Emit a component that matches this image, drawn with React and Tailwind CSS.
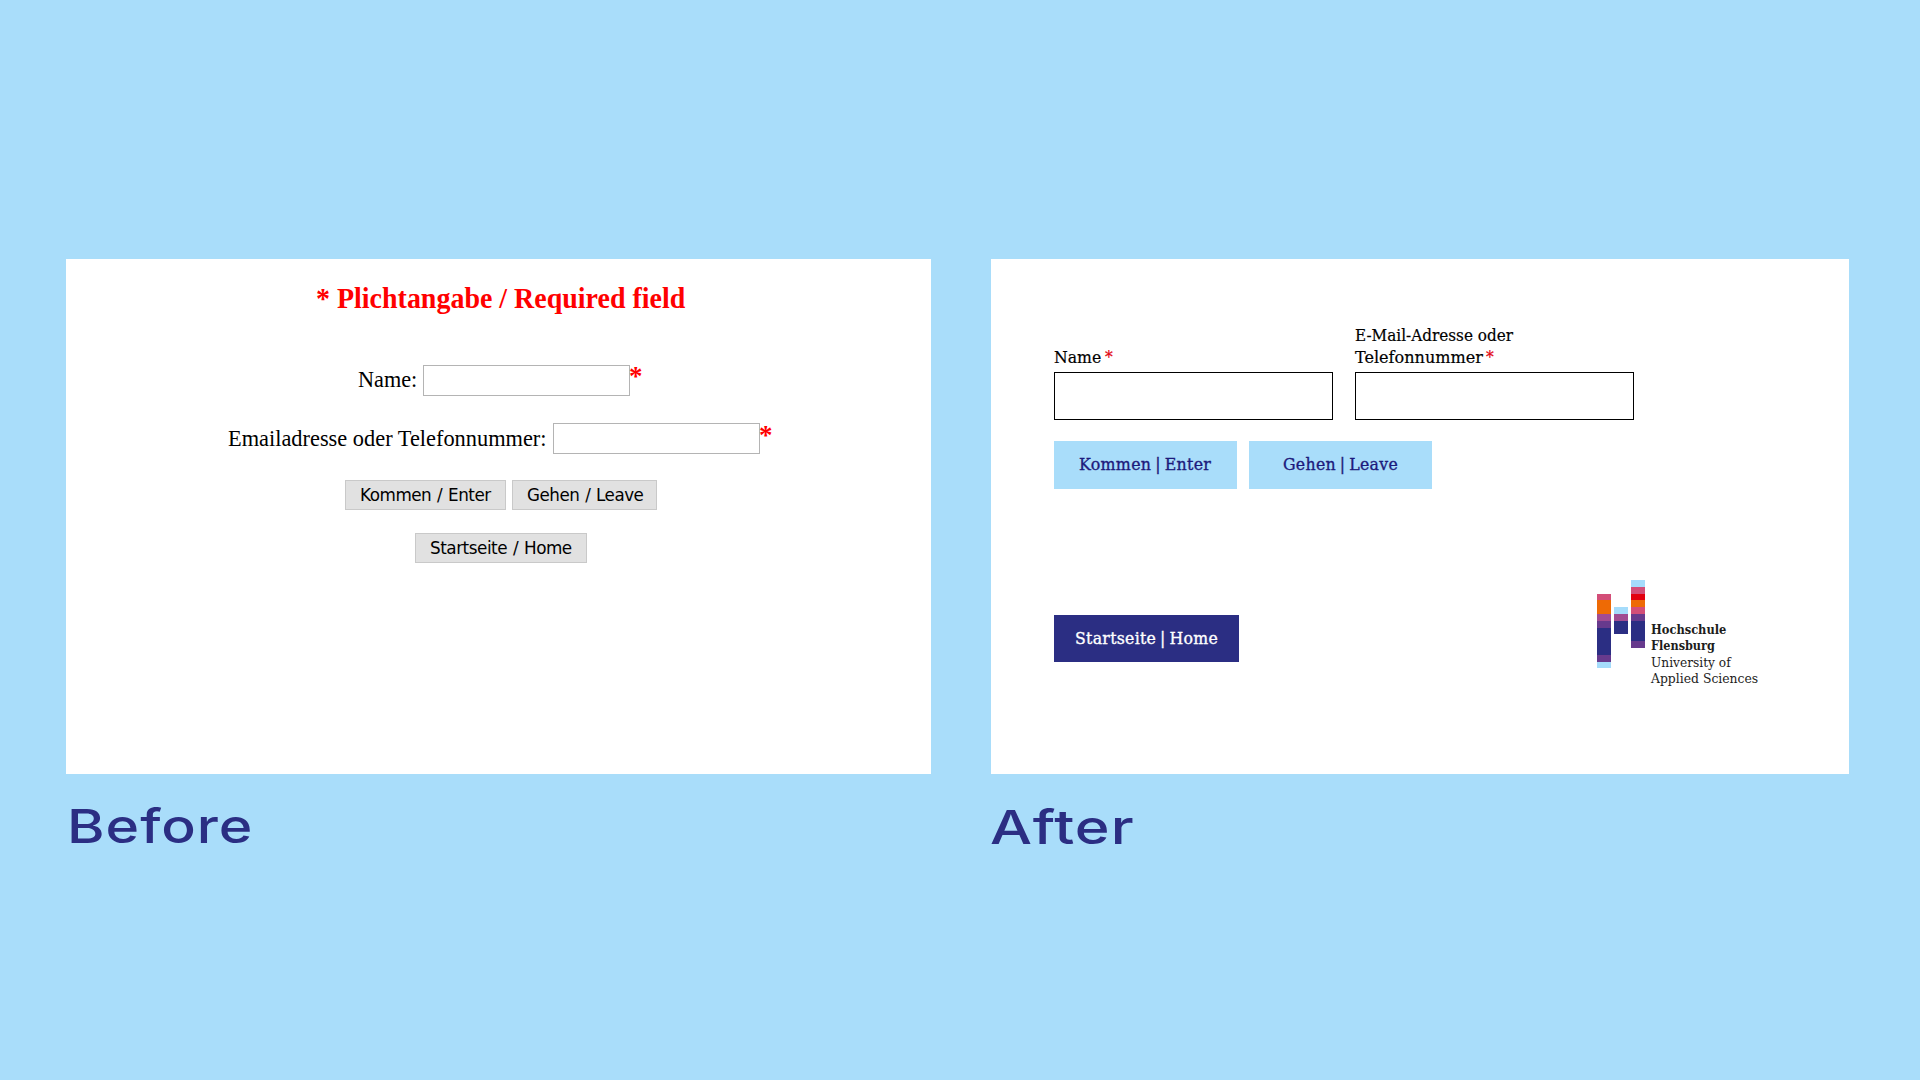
import { useLayoutEffect, useRef, useState } from 'react';

const SERIF = "font-['Liberation_Serif',serif]";
const SANS = "font-['DejaVu_Sans',sans-serif]";
const SLAB = "font-['DejaVu_Serif',serif]";
const DISPLAY = "font-['Inter',sans-serif]";

// Text set to a fixed measure: the glyphs are condensed or widened to fill `width`.
function Fit({ width, className = '', children }) {
  const ref = useRef(null);
  const [scale, setScale] = useState(1);
  useLayoutEffect(() => {
    const measure = () => setScale(width / ref.current.offsetWidth);
    measure();
    document.fonts?.ready.then(() => ref.current && measure());
  }, [width]);
  return (
    <span className={`block shrink-0 whitespace-nowrap ${className}`} style={{ width }}>
      <span ref={ref} className="inline-block origin-left align-top" style={{ transform: `scaleX(${scale})` }}>
        {children}
      </span>
    </span>
  );
}

function OldField({ label, labelWidth, className, textClass, starClass }) {
  return (
    <div className={`flex h-[31px] ${className}`}>
      <Fit width={labelWidth} className={`${SERIF} ${textClass} mr-[6px] text-[23px] leading-[28px] text-black`}>{label}</Fit>
      <input aria-label={label} className="block h-[31px] w-[207px] border border-[#b4b4b4] bg-white outline-none" />
      <span className={`${SERIF} ${starClass} -ml-px block text-[27px] font-bold leading-[23px] text-[#ff0000]`}>*</span>
    </div>
  );
}

function OldButton({ width, className, children }) {
  return (
    <button className={`${SANS} flex h-[30px] items-start justify-center border border-[#c9c9c9] bg-[#e1e1e1] pt-[1px] text-[18px] leading-[25px] tracking-[-0.5px] text-black [word-spacing:1px] ${className}`}>
      <Fit width={width}>{children}</Fit>
    </button>
  );
}

function NewButton({ width, className, children }) {
  return (
    <button className={`${SLAB} flex h-[47.5px] items-center justify-center pt-px text-[16.5px] leading-[24px] tracking-[0.3px] [word-spacing:-1.5px] [-webkit-text-stroke:0.35px_currentColor] ${className}`}>
      <Fit width={width}>{children}</Fit>
    </button>
  );
}

const C = {
  sky: 'bg-[#a5dcfb]',
  pink: 'bg-[#d34e78]',
  orange: 'bg-[#ee6a05]',
  red: 'bg-[#e3000f]',
  mauve: 'bg-[#a14c92]',
  purple: 'bg-[#673a8d]',
  navy: 'bg-[#2b2e83]',
};
const BARS = [
  { top: 'mt-[13.6px]', cells: ['pink', 'orange', 'orange', 'mauve', 'purple', 'navy', 'navy', 'navy', 'navy', 'purple', 'sky'] },
  { top: 'mt-[27.2px]', cells: ['sky', 'mauve', 'navy', 'navy'] },
  { top: 'mt-0', cells: ['sky', 'pink', 'red', 'orange', 'pink', 'purple', 'navy', 'navy', 'navy', 'purple'] },
];

function Logo() {
  return (
    <div className="flex">
      <div className="flex gap-[3.2px]">
        {BARS.map((bar, i) => (
          <div key={i} className={`w-[13.8px] ${bar.top}`}>
            {bar.cells.map((c, j) => <div key={j} className={`h-[6.8px] ${C[c]}`} />)}
          </div>
        ))}
      </div>
      <div className={`${SLAB} ml-[6px] mt-[42.2px] text-[12.5px] leading-[16.2px] text-[#1d1d1b]`}>
        <Fit width={75} className="font-bold">Hochschule</Fit>
        <Fit width={64} className="font-bold">Flensburg</Fit>
        <Fit width={80}>University of</Fit>
        <Fit width={107}>Applied Sciences</Fit>
      </div>
    </div>
  );
}

export default function App() {
  return (
    <main className="flex h-[1080px] w-[1920px] items-start overflow-hidden bg-[#a9ddfa] pl-[66px] pt-[259px]">
      <section className="w-[865px]">
        <div className="flex h-[515px] flex-col items-start bg-white">
          <Fit width={369} className={`${SERIF} ml-[250px] mt-[24px] text-[28.5px] font-bold leading-[32px] text-[#ff0000]`}>* Plichtangabe / Required field</Fit>
          <OldField label="Name:" labelWidth={59} className="ml-[292px] mt-[50px]" textClass="mt-px" starClass="mt-0" />
          <OldField label="Emailadresse oder Telefonnummer:" labelWidth={319} className="ml-[162px] mt-[27px]" textClass="mt-[2px]" starClass="mt-px" />
          <div className="ml-[279px] mt-[26px] flex gap-[6px]">
            <OldButton width={130.5} className="w-[161px]">Kommen / Enter</OldButton>
            <OldButton width={116} className="w-[145px]">Gehen / Leave</OldButton>
          </div>
          <OldButton width={142} className="ml-[349px] mt-[23px] w-[172px]">Startseite / Home</OldButton>
        </div>
        <Fit width={187} className={`${DISPLAY} ml-[1px] mt-[24px] text-[46.5px] font-medium leading-[56px] tracking-[0.8px] text-[#2b2e83]`}>Before</Fit>
      </section>

      <section className="ml-[60px] w-[858px]">
        <div className="flex h-[515px] flex-col bg-white pl-[62.5px] pt-[66px]">
          <div className={`${SLAB} flex items-end gap-[22px] text-[16.5px] leading-[22.3px] text-black`}>
            <label className="w-[279px] [-webkit-text-stroke:0.2px_currentColor]">
              <span className="flex gap-[4px]"><Fit width={47.5}>Name</Fit><Fit width={7.5} className="text-[#e3000f]">*</Fit></span>
              <input className="mt-[2.5px] block h-[47.5px] w-[279px] border-[1.5px] border-black outline-none" />
            </label>
            <label className="w-[279px] [-webkit-text-stroke:0.2px_currentColor]">
              <Fit width={158}>E-Mail-Adresse oder</Fit>
              <span className="flex gap-[4px]"><Fit width={127.5}>Telefonnummer</Fit><Fit width={7.5} className="text-[#e3000f]">*</Fit></span>
              <input className="mt-[2.5px] block h-[47.5px] w-[279px] border-[1.5px] border-black outline-none" />
            </label>
          </div>
          <div className="mt-[21.5px] flex gap-[12.6px]">
            <NewButton width={132.5} className="w-[183px] bg-[#a9ddfa] text-[#1c1a7c]">Kommen | Enter</NewButton>
            <NewButton width={115.5} className="w-[183px] bg-[#a9ddfa] text-[#1c1a7c]">Gehen | Leave</NewButton>
          </div>
          <div className="mt-[91.5px] flex items-start">
            <NewButton width={143} className="mt-[34.8px] w-[185.5px] bg-[#2b2e83] text-white">Startseite | Home</NewButton>
            <div className="ml-[358px]"><Logo /></div>
          </div>
        </div>
        <Fit width={144} className={`${DISPLAY} -ml-px mt-[25px] text-[46.5px] font-medium leading-[56px] tracking-[0.8px] text-[#2b2e83]`}>After</Fit>
      </section>
    </main>
  );
}
